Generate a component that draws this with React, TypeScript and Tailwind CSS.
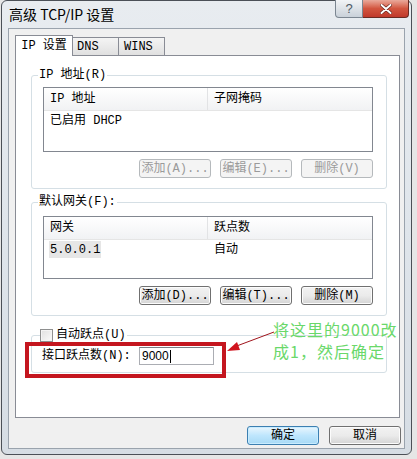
import React from 'react';

const mono = "font-['Liberation_Mono','Noto_Sans_CJK_SC',monospace]";

function Btn({ label, disabled, primary }: { label: string; disabled?: boolean; primary?: boolean }) {
  const base = 'h-[19px] w-[72px] flex items-center justify-center rounded-[3px] border text-[12px] leading-none';
  if (disabled) {
    return <div className={`${base} border-[#b5b9bc] bg-[#f4f4f4] text-[#9a9a9a]`}>{label}</div>;
  }
  if (primary) {
    return (
      <div className={`${base} border-[#3c7fb1] bg-gradient-to-b from-[#eaf6fd] via-[#bee6fd] to-[#a7d9f5] text-black shadow-[inset_0_0_0_1px_#c8ecff]`}>
        {label}
      </div>
    );
  }
  return (
    <div className={`${base} border-[#707070] bg-gradient-to-b from-[#f2f2f2] via-[#ebebeb] to-[#d4d4d4] text-black shadow-[inset_0_0_0_1px_#fcfcfc]`}>
      {label}
    </div>
  );
}

function ListBox({
  cols,
  rows,
  height,
  selectFirst,
}: {
  cols: [string, string];
  rows: [string, string][];
  height: string;
  selectFirst?: boolean;
}) {
  return (
    <div className={`ml-[11px] w-[330px] ${height} border border-[#828790] bg-white`}>
      <div className="flex h-[23px] border-b border-[#e5e5e5] bg-gradient-to-b from-white to-[#f1f2f4]">
        <div className="w-[164px] border-r border-[#e2e3e5] pl-[6px] flex items-center">{cols[0]}</div>
        <div className="flex-1 pl-[6px] flex items-center">{cols[1]}</div>
      </div>
      {rows.map((r, i) => (
        <div key={i} className="flex h-[17px] mt-px">
          <div className="w-[164px] pl-[5px] flex items-center">
            <span className={`px-[1px] h-[17px] flex items-center ${selectFirst && i === 0 ? 'bg-[#e6e6e6]' : ''}`}>{r[0]}</span>
          </div>
          <div className="flex-1 pl-[6px] flex items-center">{r[1]}</div>
        </div>
      ))}
    </div>
  );
}

export default function App() {
  return (
    <div className={`relative w-[417px] h-[459px] overflow-hidden bg-[#e6e6e6] text-[12px] text-black ${mono}`}>
      {/* window */}
      <div className="ml-[1px] w-[411px] h-[455px] rounded-[6px] border border-[#4b5057] bg-gradient-to-b from-[#e8ecf0] via-[#dfe5eb] to-[#d6dde4] flex flex-col">
        {/* title bar */}
        <div className="h-[27px] flex items-start">
          <div className="pl-[7px] pt-[4px] text-[14px] leading-[18px] font-['Noto_Sans_CJK_SC',sans-serif] text-black">
            高级 TCP/IP 设置
          </div>
          <div className="ml-auto mr-[2px] flex -mt-px">
            <div className="w-[28px] h-[18px] rounded-bl-[4px] border border-[#7b8691] border-t-0 bg-gradient-to-b from-[#f2f4f6] to-[#c9d1d9] flex items-center justify-center text-[13px] leading-none text-[#4d5864] font-['Liberation_Sans',sans-serif]">
              ?
            </div>
            <div className="w-[46px] h-[18px] rounded-br-[4px] border border-[#6b2a22] border-t-0 border-l-0 bg-gradient-to-b from-[#e9a99b] via-[#d2553f] to-[#c0392b] flex items-center justify-center">
              <svg width="12" height="10" viewBox="0 0 12 10">
                <path d="M1.5 1 L10.5 9 M10.5 1 L1.5 9" stroke="#5a1a12" strokeWidth="3.2" strokeLinecap="round" />
                <path d="M1.5 1 L10.5 9 M10.5 1 L1.5 9" stroke="#ffffff" strokeWidth="2" strokeLinecap="round" />
              </svg>
            </div>
          </div>
        </div>

        {/* client area */}
        <div className="ml-[6px] w-[397px] h-[421px] border border-[#9aa3ad] bg-[#f0f0f0] pl-[6px] pt-[6px] flex flex-col">
          {/* tabs */}
          <div className="flex items-start h-[20px]">
            <div className="relative z-10 w-[58px] h-[21px] border border-b-0 border-[#898c95] bg-white flex items-center justify-center pb-[1px]">
              IP 设置
            </div>
            <div className="mt-[2px] w-[46px] h-[18px] border-t border-r border-[#898c95] bg-gradient-to-b from-[#f4f4f4] to-[#e0e0e0] pl-[4px] flex items-center">
              DNS
            </div>
            <div className="mt-[2px] w-[46px] h-[18px] border-t border-r border-[#898c95] bg-gradient-to-b from-[#f4f4f4] to-[#e0e0e0] pl-[5px] flex items-center">
              WINS
            </div>
          </div>

          {/* tab panel */}
          <div className="w-[385px] h-[363px] border border-[#898c95] bg-white flex flex-col">
            {/* IP 地址 */}
            <fieldset className="mt-[11px] ml-[15px] w-[356px] rounded-[3px] border border-[#d5dfe5] pb-[10px]">
              <legend className="ml-[6px] px-[1px] leading-[16px]">IP 地址(R)</legend>
              <div className="mt-[4px]">
                <ListBox cols={['IP 地址', '子网掩码']} rows={[['已启用 DHCP', '']]} height="h-[65px]" />
              </div>
              <div className="mt-[7px] flex justify-end gap-[9px] pr-[13px]">
                <Btn label="添加(A)..." disabled />
                <Btn label="编辑(E)..." disabled />
                <Btn label="删除(V)" disabled />
              </div>
            </fieldset>

            {/* 默认网关 */}
            <fieldset className="mt-[5px] ml-[15px] w-[356px] rounded-[3px] border border-[#d5dfe5] pb-[10px]">
              <legend className="ml-[6px] px-[1px] leading-[16px]">默认网关(F):</legend>
              <div className="mt-[6px]">
                <ListBox cols={['网关', '跃点数']} rows={[['5.0.0.1', '自动']]} height="h-[63px]" selectFirst />
              </div>
              <div className="mt-[7px] flex justify-end gap-[9px] pr-[13px]">
                <Btn label="添加(D)..." />
                <Btn label="编辑(T)..." />
                <Btn label="删除(M)" />
              </div>
            </fieldset>

            {/* 自动跃点 */}
            <fieldset className="mt-[11px] ml-[15px] w-[356px] rounded-[3px] border border-[#d5dfe5] pb-[7px]">
              <legend className="ml-[8px] flex items-center gap-[3px] leading-[16px] pr-[1px]">
                <span className="w-[13px] h-[13px] border border-[#8e8f8f] bg-gradient-to-br from-[#e0e0e0] to-[#fbfbfb] shadow-[inset_0_0_0_1px_#f4f4f4]" />
                自动跃点(U)
              </legend>
              <div className="mt-[4px] flex items-center pl-[10px]">
                <span className="w-[97px]">接口跃点数(N):</span>
                <div className="w-[75px] h-[18px] border border-[#abadb3] border-t-[#7a7e86] bg-white flex items-center pl-[2px] font-['Liberation_Sans',sans-serif] text-[12px]">
                  9000<span className="w-px h-[13px] bg-black ml-[1px]" />
                </div>
              </div>
            </fieldset>
          </div>

          {/* bottom buttons */}
          <div className="mt-[8px] flex justify-end gap-[10px] pr-[3px]">
            <Btn label="确定" primary />
            <Btn label="取消" />
          </div>
        </div>
      </div>

      {/* annotation: red box */}
      <div className="absolute left-[25px] top-[342px] w-[201px] h-[36px] border-[4px] border-[#c4161f]" />

      {/* annotation: arrow */}
      <svg className="absolute left-[222px] top-[326px]" width="60" height="32" viewBox="0 0 60 32">
        <line x1="52" y1="6" x2="12" y2="21" stroke="#a0141c" strokeWidth="1" />
        <polygon points="5,25 15,16 18,24" fill="#d0141e" />
      </svg>

      {/* annotation: note */}
      <div className="absolute left-[273px] top-[318px] text-[16px] leading-[22px] tracking-[1px] text-[#6ad86a] font-['Noto_Sans_CJK_SC',sans-serif]">
        <div>将这里的9000改</div>
        <div>成1，然后确定</div>
      </div>
    </div>
  );
}
